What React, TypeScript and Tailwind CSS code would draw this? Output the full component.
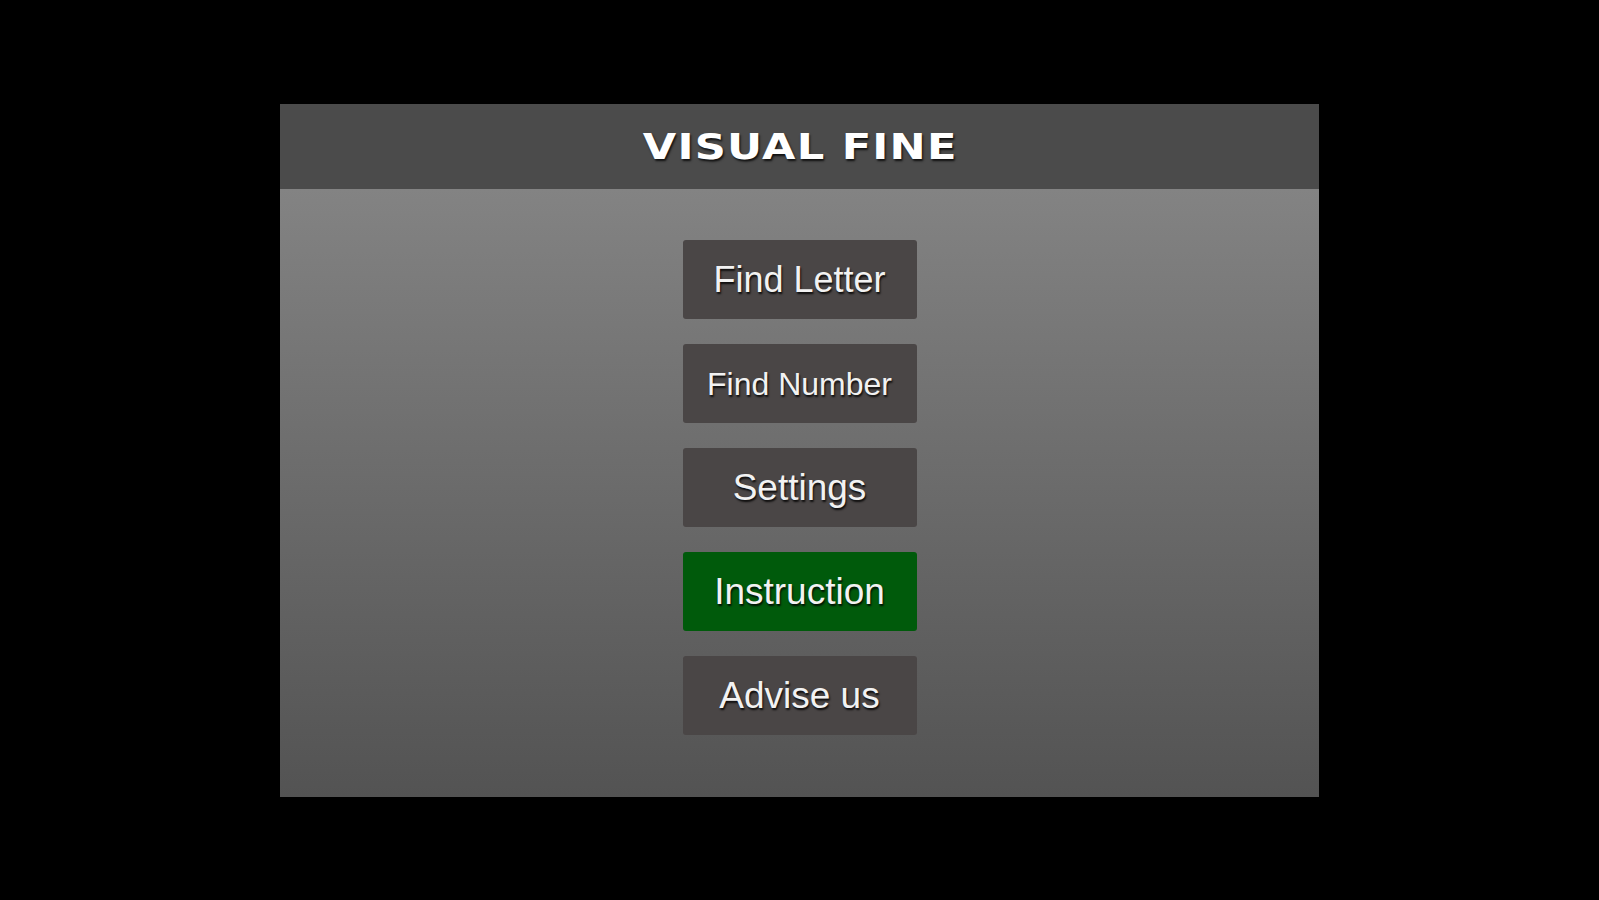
const buttons = [
  { label: 'Find Letter', size: 'text-[36px]', active: false },
  { label: 'Find Number', size: 'text-[32px]', active: false },
  { label: 'Settings', size: 'text-[37px]', active: false },
  { label: 'Instruction', size: 'text-[37px]', active: true },
  { label: 'Advise us', size: 'text-[37px]', active: false },
];

export default function App() {
  return (
    <div className="flex h-[900px] w-full justify-center bg-black font-['Liberation_Sans',Arial,sans-serif]">
      <div className="mt-[104px] flex h-[693px] w-[1039px] flex-col">
        {/* Header */}
        <div className="flex h-[85px] items-center justify-center bg-[#4b4b4b]">
          <h1 className="scale-x-[1.2] pl-[1px] font-['DejaVu_Sans',sans-serif] text-[36px] font-bold tracking-[1px] text-white [text-shadow:1px_2px_2px_rgba(0,0,0,0.8)]">
            VISUAL FINE
          </h1>
        </div>

        {/* Menu */}
        <div className="flex flex-1 flex-col items-center gap-[25px] bg-gradient-to-b from-[#838383] to-[#535353] pt-[51px]">
          {buttons.map((b) => (
            <button
              key={b.label}
              className={`flex h-[79px] w-[234px] items-center justify-center rounded-[3px] text-[#f2f2f2] [text-shadow:1px_2px_2px_rgba(0,0,0,0.85)] ${b.size} ${
                b.active ? 'bg-[#005a0b]' : 'bg-[#4a4646]'
              }`}
            >
              {b.label}
            </button>
          ))}
        </div>
      </div>
    </div>
  );
}
